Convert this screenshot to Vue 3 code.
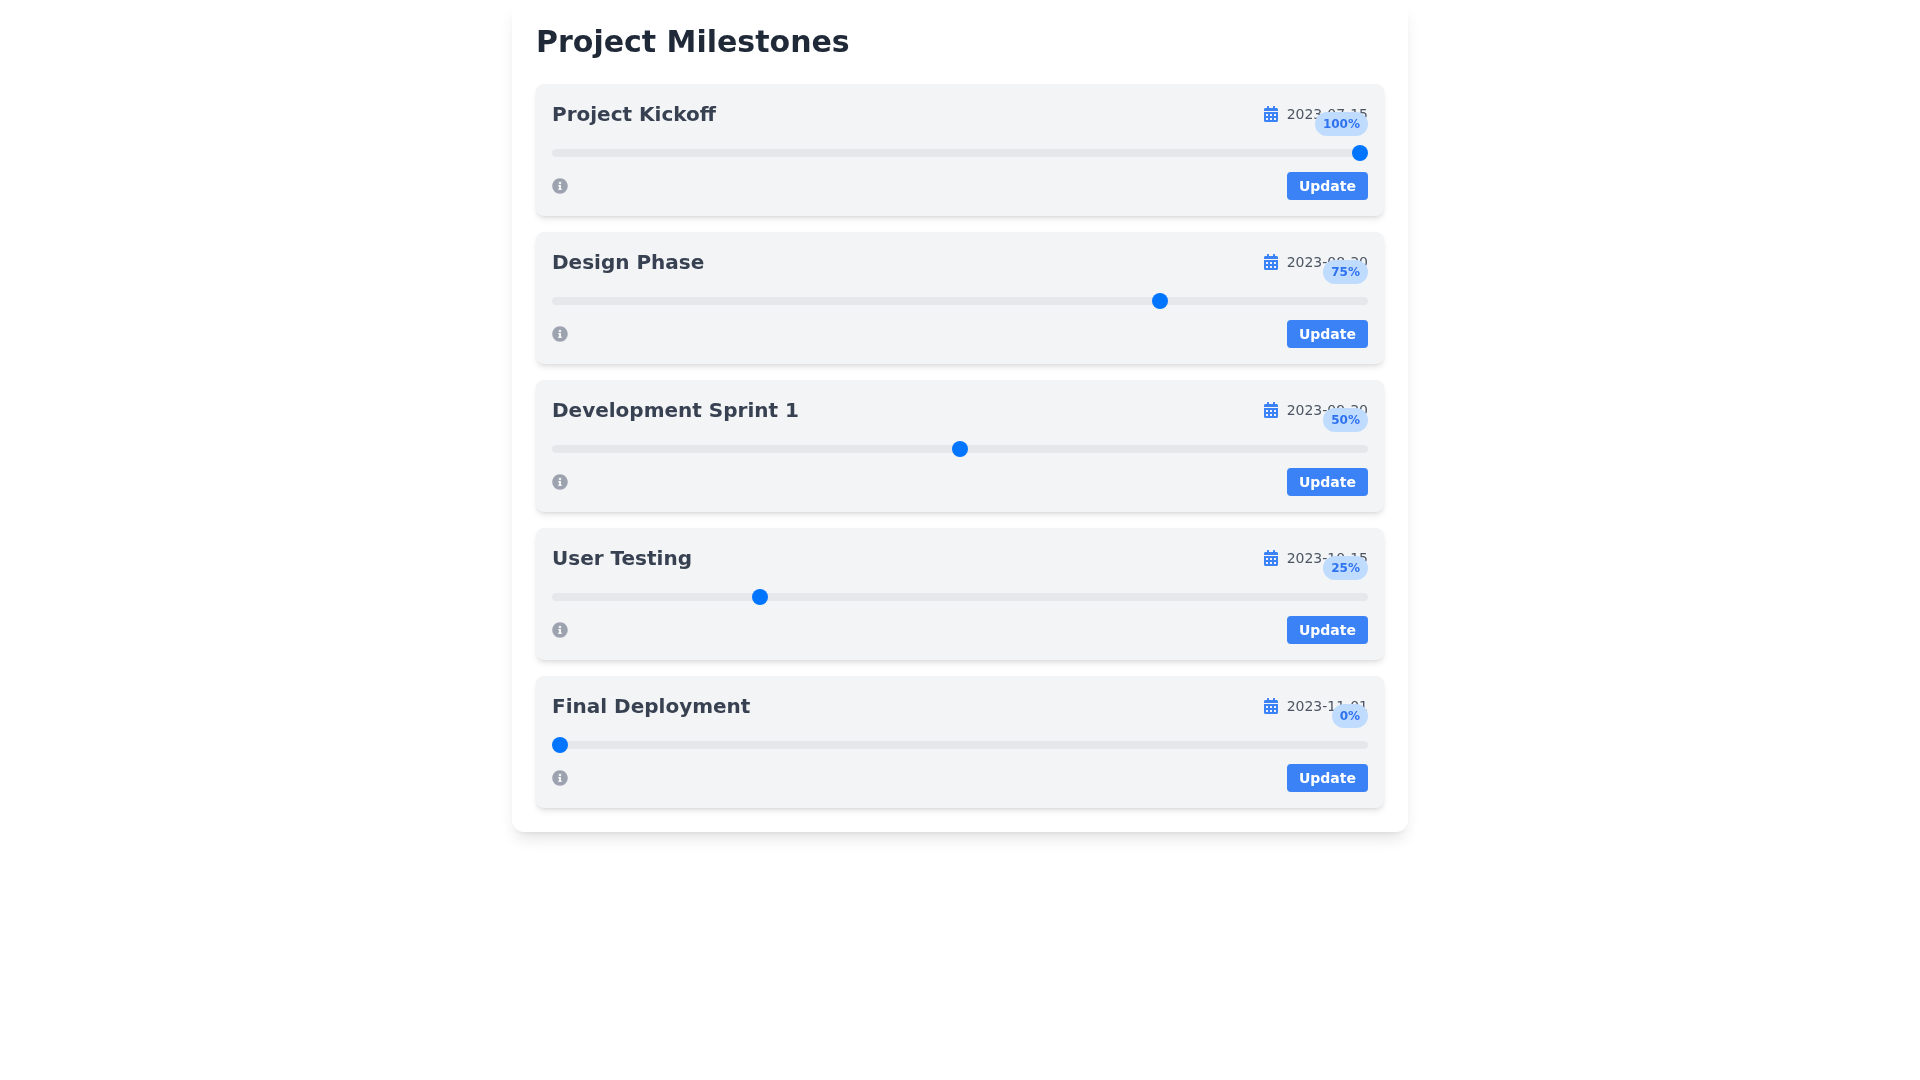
<script setup>
const milestones = [
  { title: 'Project Kickoff', date: '2023-07-15', progress: 100 },
  { title: 'Design Phase', date: '2023-08-30', progress: 75 },
  { title: 'Development Sprint 1', date: '2023-09-30', progress: 50 },
  { title: 'User Testing', date: '2023-10-15', progress: 25 },
  { title: 'Final Deployment', date: '2023-11-01', progress: 0 }
]
</script>

<template>
  <div class="page">
    <main class="panel">
      <h1 class="heading">Project Milestones</h1>
      <div class="list">
        <section v-for="m in milestones" :key="m.title" class="card">
          <div class="head">
            <h2 class="title">{{ m.title }}</h2>
            <div class="date">
              <svg class="cal" viewBox="0 0 448 512" aria-hidden="true">
                <path fill="currentColor" d="M0 464c0 26.500 21.500 48 48 48h352c26.500 0 48-21.500 48-48V192H0v272zm320-196c0-6.600 5.400-12 12-12h40c6.600 0 12 5.400 12 12v40c0 6.600-5.400 12-12 12h-40c-6.600 0-12-5.400-12-12v-40zm0 128c0-6.600 5.400-12 12-12h40c6.600 0 12 5.400 12 12v40c0 6.600-5.400 12-12 12h-40c-6.600 0-12-5.400-12-12v-40zM192 268c0-6.600 5.400-12 12-12h40c6.600 0 12 5.400 12 12v40c0 6.600-5.400 12-12 12h-40c-6.600 0-12-5.400-12-12v-40zm0 128c0-6.600 5.400-12 12-12h40c6.600 0 12 5.400 12 12v40c0 6.600-5.400 12-12 12h-40c-6.600 0-12-5.400-12-12v-40zM64 268c0-6.600 5.400-12 12-12h40c6.600 0 12 5.400 12 12v40c0 6.600-5.400 12-12 12H76c-6.600 0-12-5.400-12-12v-40zm0 128c0-6.600 5.400-12 12-12h40c6.600 0 12 5.400 12 12v40c0 6.600-5.400 12-12 12H76c-6.600 0-12-5.400-12-12v-40zM400 64h-48V16c0-8.800-7.200-16-16-16h-32c-8.800 0-16 7.200-16 16v48H160V16c0-8.800-7.200-16-16-16h-32c-8.800 0-16 7.200-16 16v48H48C21.500 64 0 85.500 0 112v48h448v-48c0-26.500-21.500-48-48-48z"/>
              </svg>
              <span>{{ m.date }}</span>
            </div>
          </div>
          <div class="slider">
            <input class="range" type="range" min="0" max="100" :value="m.progress" :aria-label="m.title" />
            <span class="badge">{{ m.progress }}%</span>
          </div>
          <div class="foot">
            <svg class="info" viewBox="0 0 512 512" aria-hidden="true">
              <path fill="currentColor" d="M256 8C119.043 8 8 119.083 8 256c0 136.997 111.043 248 248 248s248-111.003 248-248C504 119.083 392.957 8 256 8zm0 110c23.196 0 42 18.804 42 42s-18.804 42-42 42-42-18.804-42-42 18.804-42 42-42zm56 254c0 6.627-5.373 12-12 12h-88c-6.627 0-12-5.373-12-12v-24c0-6.627 5.373-12 12-12h12v-64h-12c-6.627 0-12-5.373-12-12v-24c0-6.627 5.373-12 12-12h64c6.627 0 12 5.373 12 12v100h12c6.627 0 12 5.373 12 12v24z"/>
            </svg>
            <button class="update" type="button">Update</button>
          </div>
        </section>
      </div>
    </main>
  </div>
</template>

<style>
body { margin: 0; }
</style>

<style scoped>
.page {
  min-height: 100vh;
  background: #fff;
}
.panel {
  box-sizing: border-box;
  width: 896px;
  margin: 0 auto;
  padding: 24px;
  background: #fff;
  border-radius: 12px;
  box-shadow: 0 10px 15px -3px rgba(0,0,0,.1), 0 4px 6px -4px rgba(0,0,0,.1);
  font-family: "DejaVu Sans", sans-serif;
  will-change: transform;
}
.heading {
  margin: 0 0 24px;
  font-size: 30px;
  line-height: 36px;
  font-weight: 700;
  color: #1f2937;
}
.list { display: flex; flex-direction: column; gap: 16px; }
.card {
  padding: 16px;
  background: #f3f4f6;
  border-radius: 8px;
  box-shadow: 0 4px 6px -1px rgba(0,0,0,.1), 0 2px 4px -2px rgba(0,0,0,.1);
}
.head { display: flex; justify-content: space-between; align-items: center; }
.title { margin: 0; font-size: 20px; line-height: 28px; font-weight: 600; color: #374151; }
.date { display: flex; align-items: center; gap: 9px; font-size: 14px; line-height: 20px; color: #4b5563; }
.cal { width: 14px; height: 16px; color: #3b82f6; }
.slider { position: relative; height: 18px; margin: 16px 0 10px; }
.range {
  display: block;
  width: 100%;
  height: 8px;
  margin: 0;
  position: absolute;
  top: 5px;
  left: 0;
  appearance: none;
  -webkit-appearance: none;
  background: #e5e7eb;
  border-radius: 4px;
  outline: none;
}
.range::-webkit-slider-thumb {
  -webkit-appearance: none;
  appearance: none;
  width: 16px;
  height: 16px;
  border-radius: 50%;
  background: #0075ff;
}
.badge {
  position: absolute;
  right: 0;
  top: -32px;
  padding: 4px 8px;
  font-size: 12px;
  line-height: 16px;
  font-weight: 700;
  color: #2f72f0;
  background: #bfdbfe;
  border-radius: 9999px;
}
.foot { display: flex; justify-content: space-between; align-items: center; }
.info { width: 16px; height: 16px; color: #9ca3af; }
.update {
  padding: 4px 12px;
  border: 0;
  border-radius: 4px;
  background: #3b82f6;
  color: #fff;
  font: 700 14px/20px "DejaVu Sans", sans-serif;
}
</style>
